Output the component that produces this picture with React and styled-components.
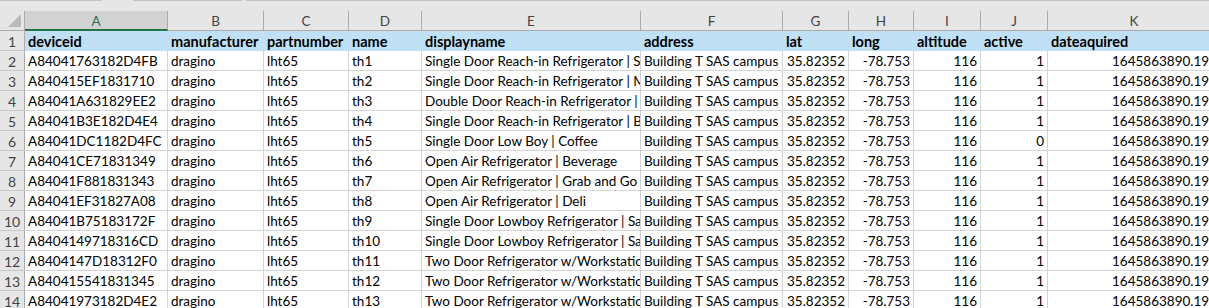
import React from "react";
import styled, { createGlobalStyle, css } from "styled-components";

const Global = createGlobalStyle`
  html, body { margin: 0; padding: 0; background: #ffffff; overflow: hidden; }
  body { font-family: "Lato", "Open Sans", sans-serif; }
`;

const COLS = [
  { key: "A", w: 143 },
  { key: "B", w: 96 },
  { key: "C", w: 85 },
  { key: "D", w: 73 },
  { key: "E", w: 219 },
  { key: "F", w: 142 },
  { key: "G", w: 66 },
  { key: "H", w: 65 },
  { key: "I", w: 67 },
  { key: "J", w: 67 },
  { key: "K", w: 173 },
];

const TEMPLATE = `25px ${COLS.map((c) => c.w + "px").join(" ")}`;

const Sheet = styled.div`
  width: 1209px;
  height: 308px;
  overflow: hidden;
  background: #ffffff;
  font-family: "Lato", sans-serif;
`;

const TopStrip = styled.div`
  height: 11px;
  background: #e6e6e6;
  display: flex;
  align-items: flex-start;
`;

const TopSeg = styled.div`
  height: 1px;
  background: #c3c3c3;
  width: ${(p) => p.$w}px;
  margin-left: ${(p) => p.$gap || 0}px;
`;

const Row = styled.div`
  display: grid;
  grid-template-columns: ${TEMPLATE};
  height: 20px;
`;

const Corner = styled.div`
  position: relative;
  background: #e6e6e6;
  border-right: 1px solid #ababab;
  border-bottom: 1px solid #ababab;
  box-sizing: border-box;
`;

const CornerTri = styled.div`
  position: absolute;
  right: 3px;
  bottom: 3px;
  width: 0;
  height: 0;
  border-left: 13px solid transparent;
  border-bottom: 13px solid #b9b9b9;
`;

const ColHead = styled.div`
  box-sizing: border-box;
  background: ${(p) => (p.$active ? "#d2d2d2" : "#e6e6e6")};
  border-right: 1px solid #ababab;
  border-bottom: ${(p) => (p.$active ? "2px solid #217346" : "1px solid #ababab")};
  color: ${(p) => (p.$active ? "#217346" : "#444444")};
  font-family: "Lato", sans-serif;
  font-size: 13.5px;
  display: flex;
  align-items: center;
  justify-content: center;
  padding-top: ${(p) => (p.$active ? "2px" : "1px")};
`;

const RowHead = styled.div`
  box-sizing: border-box;
  background: #e6e6e6;
  border-right: 1px solid #ababab;
  border-bottom: 1px solid #c8c8c8;
  color: #444444;
  font-size: 14px;
  display: flex;
  align-items: center;
  justify-content: center;
  padding-top: 1px;
`;

const Cell = styled.div`
  box-sizing: border-box;
  overflow: hidden;
  white-space: nowrap;
  font-size: 13.5px;
  line-height: 19px;
  padding: 1px 3px 0 3px;
  color: #000000;
  text-align: ${(p) => (p.$num ? "right" : "left")};
  ${(p) =>
    p.$head
      ? css`
          background: #c0e0f5;
          font-weight: 700;
          font-size: 14.5px;
          border-right: 1px solid #c0e0f5;
          border-bottom: 1px solid #c0e0f5;
        `
      : css`
          background: #ffffff;
          border-right: 1px solid #d4d4d4;
          border-bottom: 1px solid #d4d4d4;
        `}
`;

const HEADERS = [
  "deviceid",
  "manufacturer",
  "partnumber",
  "name",
  "displayname",
  "address",
  "lat",
  "long",
  "altitude",
  "active",
  "dateaquired",
];

const ROWS = [
  ["A84041763182D4FB", "Single Door Reach-in Refrigerator | S", "1"],
  ["A840415EF1831710", "Single Door Reach-in Refrigerator | M", "1"],
  ["A84041A631829EE2", "Double Door Reach-in Refrigerator | ", "1"],
  ["A84041B3E182D4E4", "Single Door Reach-in Refrigerator | B", "1"],
  ["A84041DC1182D4FC", "Single Door Low Boy | Coffee", "0"],
  ["A84041CE71831349", "Open Air Refrigerator | Beverage", "1"],
  ["A84041F881831343", "Open Air Refrigerator | Grab and Go", "1"],
  ["A84041EF31827A08", "Open Air Refrigerator | Deli", "1"],
  ["A84041B75183172F", "Single Door Lowboy Refrigerator | Sa", "1"],
  ["A8404149718316CD", "Single Door Lowboy Refrigerator | Sa", "1"],
  ["A8404147D18312F0", "Two Door Refrigerator w/Workstatio", "1"],
  ["A840415541831345", "Two Door Refrigerator w/Workstatio", "1"],
  ["A84041973182D4E2", "Two Door Refrigerator w/Workstatio", "1"],
];

export default function App() {
  return (
    <Sheet>
      <Global />
      <TopStrip>
        <TopSeg $w={102} />
        <TopSeg $w={110} $gap={31} />
        <TopSeg $w={966} $gap={4} />
      </TopStrip>
      <Row>
        <Corner>
          <CornerTri />
        </Corner>
        {COLS.map((c, i) => (
          <ColHead key={c.key} $active={i === 0}>
            {c.key}
          </ColHead>
        ))}
      </Row>
      <Row>
        <RowHead>1</RowHead>
        {HEADERS.map((h) => (
          <Cell key={h} $head>
            {h}
          </Cell>
        ))}
      </Row>
      {ROWS.map((r, i) => (
        <Row key={r[0]}>
          <RowHead>{i + 2}</RowHead>
          <Cell>{r[0]}</Cell>
          <Cell>dragino</Cell>
          <Cell>lht65</Cell>
          <Cell>th{i + 1}</Cell>
          <Cell>{r[1]}</Cell>
          <Cell>Building T SAS campus</Cell>
          <Cell $num>35.82352</Cell>
          <Cell $num>-78.753</Cell>
          <Cell $num>116</Cell>
          <Cell $num>{r[2]}</Cell>
          <Cell $num>1645863890.198</Cell>
        </Row>
      ))}
    </Sheet>
  );
}
